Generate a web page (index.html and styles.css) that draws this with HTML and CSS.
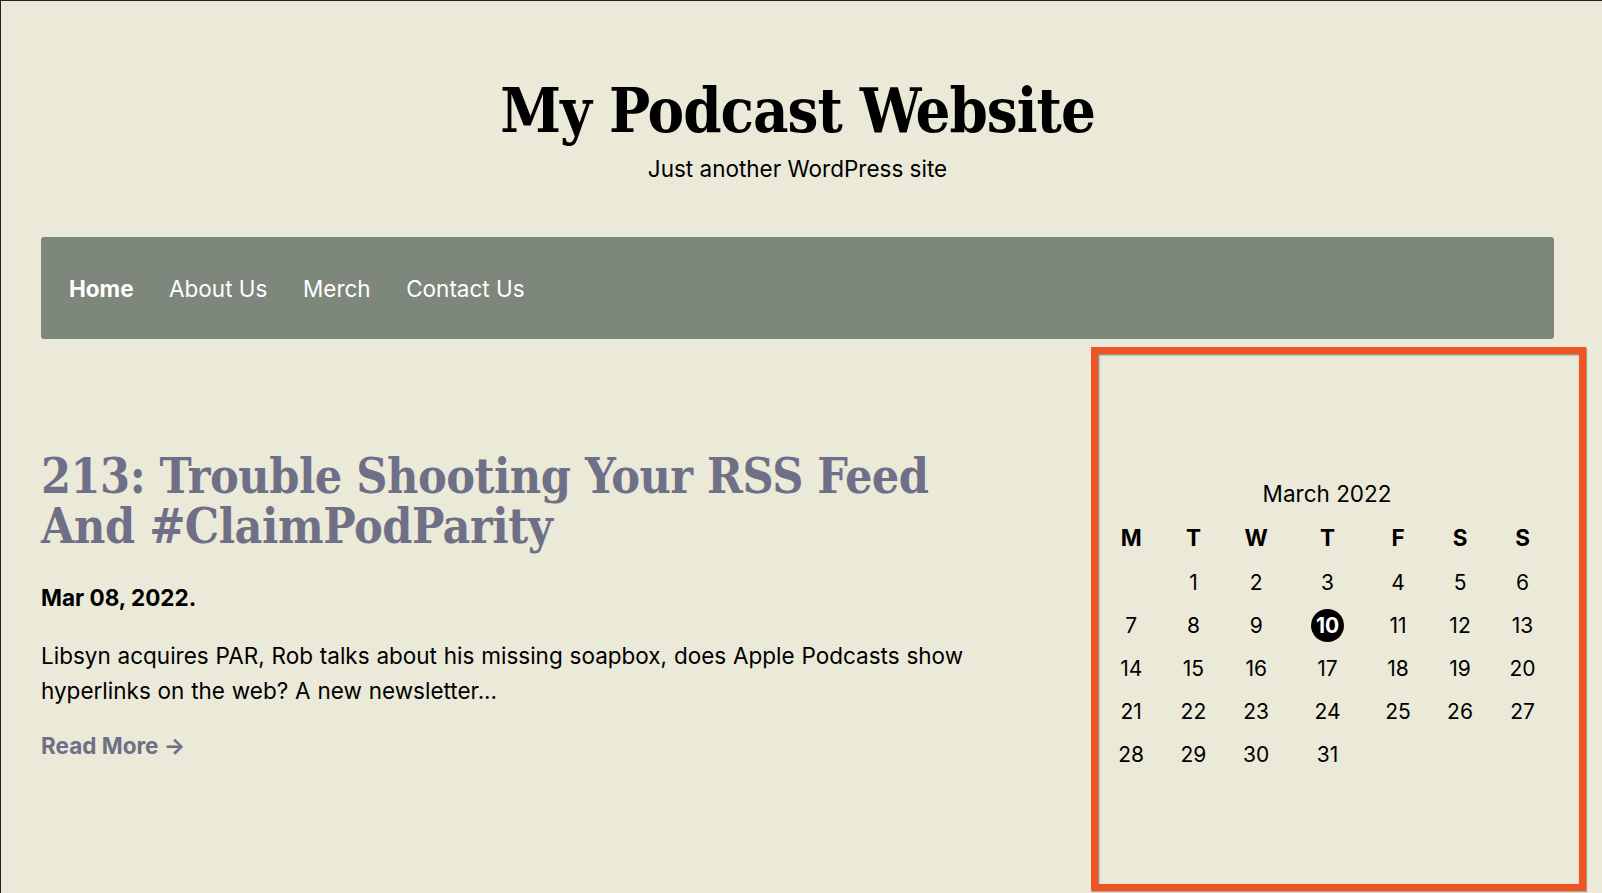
FILE: index.html
```html
<!DOCTYPE html>
<html lang="en">
<head>
    <meta charset="UTF-8">
    <meta name="viewport" content="width=device-width, initial-scale=1.0">
    <title>My Podcast Website</title>
    <link rel="stylesheet" href="styles.css">
</head>
<body>
    <div class="page">
        <header class="site-header">
            <h1 class="site-title">My Podcast Website</h1>
            <p class="site-tagline">Just another WordPress site</p>
        </header>

        <nav class="main-nav">
            <a href="#" class="current">Home</a>
            <a href="#">About Us</a>
            <a href="#">Merch</a>
            <a href="#">Contact Us</a>
        </nav>

        <div class="content">
            <main class="posts">
                <article class="post">
                    <h2 class="post-title"><a href="#">213: Trouble Shooting Your RSS Feed And #ClaimPodParity</a></h2>
                    <p class="post-date">Mar 08, 2022.</p>
                    <p class="post-excerpt">Libsyn acquires PAR, Rob talks about his missing soapbox, does Apple Podcasts show hyperlinks on the web? A new newsletter...</p>
                    <a href="#" class="read-more">Read More &rarr;</a>
                </article>
            </main>

            <aside class="sidebar">
                <!-- Calendar widget -->
                <table class="calendar">
                    <caption>March 2022</caption>
                    <thead>
                        <tr>
                            <th>M</th><th>T</th><th>W</th><th>T</th><th>F</th><th>S</th><th>S</th>
                        </tr>
                    </thead>
                    <tbody>
                        <tr><td></td><td>1</td><td>2</td><td>3</td><td>4</td><td>5</td><td>6</td></tr>
                        <tr><td>7</td><td>8</td><td>9</td><td><span class="today">10</span></td><td>11</td><td>12</td><td>13</td></tr>
                        <tr><td>14</td><td>15</td><td>16</td><td>17</td><td>18</td><td>19</td><td>20</td></tr>
                        <tr><td>21</td><td>22</td><td>23</td><td>24</td><td>25</td><td>26</td><td>27</td></tr>
                        <tr><td>28</td><td>29</td><td>30</td><td>31</td><td></td><td></td><td></td></tr>
                    </tbody>
                </table>
                <div class="highlight"></div>
            </aside>
        </div>
    </div>
</body>
</html>
```

FILE: styles.css
```css
html {
    background-color: #ebe9d8;
}

body {
    font-family: Inter, "Noto Sans", sans-serif;
    color: #000000;
    margin: 0;
    min-height: 893px;
    box-sizing: border-box;
    border-top: 1px solid #222222;
    border-left: 1px solid #222222;
    overflow: hidden;
}

a {
    color: inherit;
    text-decoration: none;
}

.page {
    margin: 0 48px 0 40px;
}

/* Header */
.site-header {
    text-align: center;
    padding-top: 73px;
}

.site-title {
    font-family: "DejaVu Serif", serif;
    font-stretch: condensed;
    font-weight: bold;
    font-size: 61px;
    line-height: 1.2;
    margin: 0;
    letter-spacing: -1px;
}

.site-tagline {
    font-size: 22.5px;
    margin: 8px 0 0;
}

/* Navigation */
.main-nav {
    display: flex;
    align-items: center;
    gap: 35.5px;
    height: 102px;
    margin-top: 55px;
    padding: 0 28px;
    background-color: #7e877b;
    border-radius: 3px;
}

.main-nav a {
    color: #ffffff;
    font-size: 22.5px;
}

.main-nav a.current {
    font-weight: 700;
}

/* Content columns */
.content {
    display: flex;
    justify-content: space-between;
}

.posts {
    width: 990px;
    padding-top: 112px;
}

.post-title {
    font-family: "DejaVu Serif", serif;
    font-stretch: condensed;
    font-weight: bold;
    font-size: 48px;
    line-height: 50px;
    color: #6f7087;
    margin: 0;
    letter-spacing: -0.5px;
}

.post-date {
    font-size: 22.5px;
    font-weight: 700;
    margin: 33px 0 0;
}

.post-excerpt {
    font-size: 22.5px;
    line-height: 35px;
    margin: 27px 0 0;
    word-spacing: 0.5px;
}

.read-more {
    display: inline-block;
    margin-top: 24px;
    font-size: 22.5px;
    font-weight: 700;
    color: #6f7087;
}

/* Sidebar */
.sidebar {
    position: relative;
    width: 30%;
    padding-top: 141px;
}

.calendar {
    width: 100%;
    border-collapse: collapse;
    text-align: center;
    font-size: 21px;
}

.calendar caption {
    font-size: 22.5px;
    padding-bottom: 6px;
}

.calendar th {
    font-weight: 700;
    font-size: 22.5px;
    height: 46px;
}

.calendar td {
    height: 43px;
    padding: 0;
}

.today {
    display: inline-block;
    width: 33px;
    height: 33px;
    line-height: 33px;
    border-radius: 50%;
    background-color: #000000;
    color: #ffffff;
    font-weight: 700;
}

/* Orange outline drawn over the calendar widget */
.highlight {
    position: absolute;
    top: 8px;
    left: -9px;
    right: -32px;
    height: 544px;
    box-sizing: border-box;
    border: 7px solid #ef5524;
    box-shadow: inset 1px 1px 2px rgba(0, 0, 0, 0.5), 1px 1px 1px rgba(0, 0, 0, 0.3);
}
```
